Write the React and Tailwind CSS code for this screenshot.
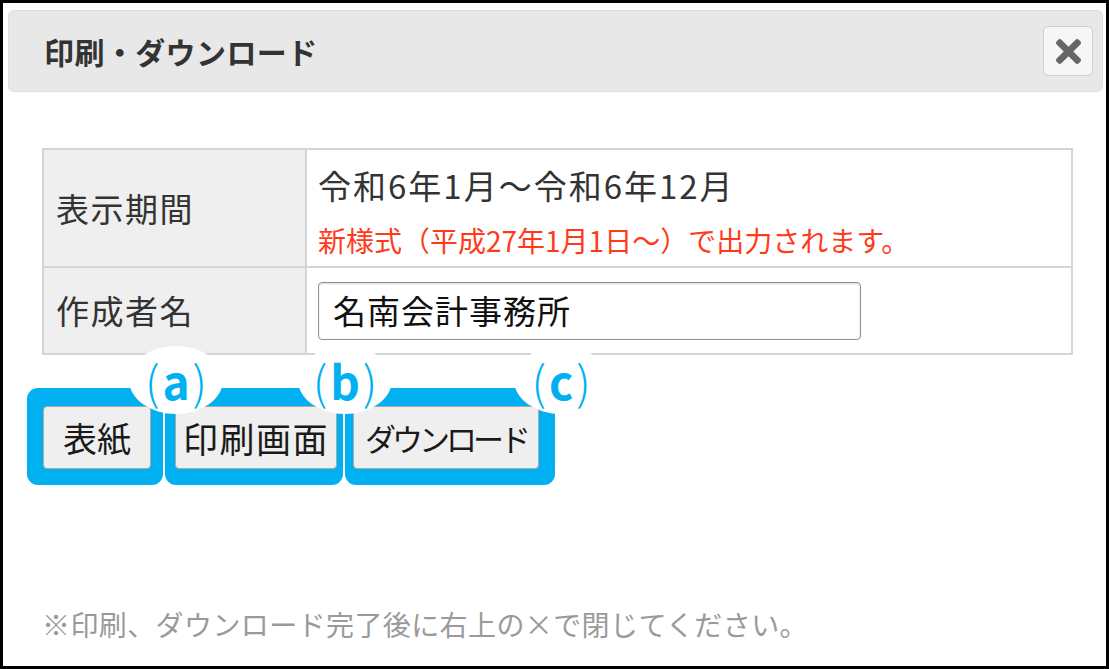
import React from "react";

const JP = { fontFamily: '"Noto Sans CJK JP", "Noto Sans", sans-serif' };

function Label({ ch, className }) {
  return (
    <div
      className={`absolute flex items-center justify-center w-[94px] h-[68px] rounded-[50%] bg-white text-[#00b0f0] ${className}`}
      style={JP}
    >
      <span className="text-[46px] leading-none font-light">(</span>
      <span className="text-[46px] leading-none font-bold mx-[3px]">{ch}</span>
      <span className="text-[46px] leading-none font-light">)</span>
    </div>
  );
}

function Btn({ children, w, cls = "" }) {
  return (
    <div
      className={`${w} h-[63px] flex items-center justify-center whitespace-nowrap rounded-[4px] border border-[#a9a9a9] bg-[#efefef] text-[#1a1a1a] leading-none ${cls}`}
    >
      {children}
    </div>
  );
}

export default function App() {
  return (
    <div
      className="relative w-[1109px] h-[669px] border-[3px] border-black bg-white flex flex-col overflow-hidden"
      style={JP}
    >
      {/* header */}
      <div className="mt-[7px] ml-[5px] mr-[3px] h-[82px] rounded-[6px] bg-[#e8e8e8] border border-[#dddddd] flex items-center justify-between pl-[35px] pr-[9px]">
        <div className="text-[30px] font-bold text-[#333] leading-none tracking-[0.4px]">印刷・ダウンロード</div>
        <div className="w-[50px] h-[50px] rounded-[5px] border border-[#cfcfcf] bg-[#f6f6f6] flex items-center justify-center">
          <svg width="25" height="25" viewBox="0 80 352 352" fill="#666">
            <path d="M242.72 256l100.07-100.07c12.28-12.28 12.28-32.19 0-44.48l-22.24-22.24c-12.28-12.28-32.19-12.28-44.48 0L176 189.28 75.930 89.21c-12.28-12.28-32.190-12.28-44.480 0L9.21 111.45c-12.28 12.28-12.28 32.19 0 44.48L109.28 256 9.21 356.07c-12.28 12.28-12.28 32.19 0 44.48l22.24 22.24c12.28 12.28 32.2 12.28 44.48 0L176 322.72l100.07 100.07c12.28 12.28 32.2 12.28 44.48 0l22.24-22.240c12.28-12.280 12.28-32.190 0-44.480L242.72 256z" />
          </svg>
        </div>
      </div>

      {/* table */}
      <div className="mt-[56px] ml-[39px] w-[1031px] border-2 border-[#d5d5d5]">
        <div className="flex h-[118px] border-b-2 border-[#d5d5d5]">
          <div className="w-[263px] shrink-0 bg-[#efefef] border-r-2 border-[#d5d5d5] flex items-center pl-[12px] text-[33px] tracking-[1.5px] text-[#333] leading-none">
            表示期間
          </div>
          <div className="flex-1 flex flex-col pl-[11px] pt-[15px]">
            <div className="text-[33px] leading-[40px] tracking-[2px] text-[#333] whitespace-nowrap">令和6年1月～令和6年12月</div>
            <div className="mt-[20px] text-[28px] leading-[30px] text-[#ff3a1a] whitespace-nowrap">
              新様式（平成27年1月1日～）で出力されます。
            </div>
          </div>
        </div>
        <div className="flex h-[85px]">
          <div className="w-[263px] shrink-0 bg-[#efefef] border-r-2 border-[#d5d5d5] flex items-center pl-[12px] text-[33px] tracking-[1.5px] text-[#333] leading-none">
            作成者名
          </div>
          <div className="flex-1 flex items-center pl-[11px]">
            <div className="w-[543px] h-[58px] rounded-[4px] border border-[#8f8f8f] shadow-[inset_0_1px_2px_rgba(0,0,0,0.15)] flex items-center pl-[14px] text-[33px] tracking-[1px] text-[#111] leading-none">
              名南会計事務所
            </div>
          </div>
        </div>
      </div>

      {/* buttons with annotation frames */}
      <div className="mt-[33px] ml-[24px] flex">
        <div className="rounded-[11px] bg-[#00b0f0] pl-[16px] pr-[12px] pt-[18px] pb-[16px]">
          <Btn w="w-[108px]" cls="text-[34px]">表紙</Btn>
        </div>
        <div className="ml-[2px] rounded-[11px] bg-[#00b0f0] pl-[10px] pr-[6px] pt-[18px] pb-[16px]">
          <Btn w="w-[162px]" cls="text-[35px] tracking-[1.5px]">印刷画面</Btn>
        </div>
        <div className="ml-[2px] rounded-[11px] bg-[#00b0f0] pl-[8px] pr-[16px] pt-[18px] pb-[16px]">
          <Btn w="w-[186px]" cls="text-[31px] tracking-[-4px]">ダウンロード</Btn>
        </div>
      </div>

      <Label ch="a" className="left-[126px] top-[343px]" />
      <Label ch="b" className="left-[295px] top-[343px]" />
      <Label ch="c" className="left-[511px] top-[343px]" />

      {/* footer */}
      <div className="mt-auto pb-[27px] pl-[39px] text-[28px] leading-[30px] tracking-[0.4px] text-[#9a9a9a] whitespace-nowrap">
        ※印刷、ダウンロード完了後に右上の×で閉じてください。
      </div>
    </div>
  );
}
